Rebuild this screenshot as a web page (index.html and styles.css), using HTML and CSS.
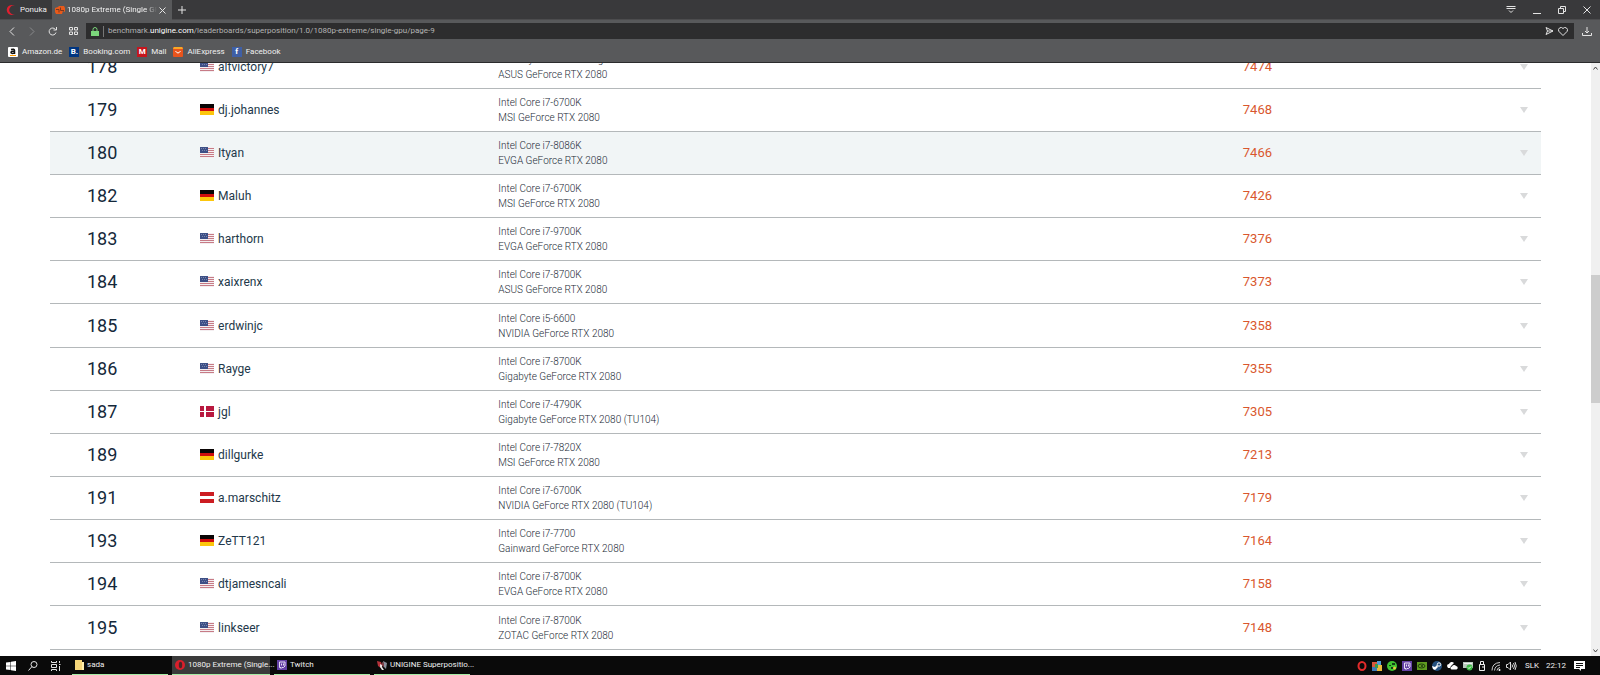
FILE: index.html
```html
<!DOCTYPE html>
<html lang="en">
<head>
<meta charset="utf-8">
<title>1080p Extreme (Single GPU)</title>
<link rel="stylesheet" href="styles.css">
</head>
<body>
<svg class="defs" aria-hidden="true">
  <symbol id="us" viewBox="0 0 14 11"><path fill="#f4eff1" d="M0 0h14v11H0z"/><path fill="#c77b86" d="M0 1h14v1H0zM0 3h14v1H0zM0 5h14v1H0zM0 7h14v1H0zM0 9h14v1H0z"/><path fill="#3d4f86" d="M0 0h8v6H0z"/><path fill="#7885ad" d="M1 1h1v1H1zM3 1h1v1H3zM5 1h1v1H5zM2 3h1v1H2zM4 3h1v1H4zM6 3h1v1H6z"/></symbol>
  <symbol id="de" viewBox="0 0 14 11"><path fill="#0a0505" d="M0 0h14v4H0z"/><path fill="#cf0d0d" d="M0 4h14v3H0z"/><path fill="#fcc60c" d="M0 7h14v4H0z"/></symbol>
  <symbol id="dk" viewBox="0 0 14 11"><path fill="#b8193f" d="M0 0h14v11H0z"/><path fill="#fff" d="M4 0h2v11H4zM0 5h14v1H0z"/></symbol>
  <symbol id="at" viewBox="0 0 14 11"><path fill="#fff" d="M0 0h14v11H0z"/><path fill="#cc1d22" d="M0 0h14v4H0zM0 7h14v4H0z"/></symbol>
  <symbol id="twitch" viewBox="0 0 10 10"><path fill="#6441a5" d="M0 0h10v10H0z"/><path fill="none" stroke="#e6dff5" d="M2.5 2h5.500v4L6.500 7.500H5L4 8.500v-1H2.500zM4.500 3.500v2M6.500 3.500v2"/></symbol>
</svg>

<header class="browser">
  <div class="tabs">
    <button class="tab menu"><svg width="10" height="10" viewBox="0 0 10 10"><path fill="#e01e2f" d="M9 1.200A5 5 0 1 0 9 8.800 3.500 3.500 0 0 1 4.500 8 4.500 4.500 0 0 1 4.500 2 3.500 3.500 0 0 1 9 1.200z"/></svg>Ponuka</button>
    <div class="tab active">
      <svg width="10" height="10" viewBox="0 0 10 10"><path fill="#e85a1a" d="M0 3l3-1 1-1h5l1 2v4L8 6 7 9H1L0 7z"/><path fill="none" stroke="#7b3820" d="M1 4.500h3v3M5.500 2.500v3H9"/></svg>
      <span class="tab-title">1080p Extreme (Single GPU)</span>
      <button class="icon" aria-label="Close tab"><svg width="7" height="7" viewBox="0 0 7 7"><path d="M.5.5l6 6M6.500.5l-6 6"/></svg></button>
    </div>
    <button class="icon plus" aria-label="New tab"><svg width="8" height="8" viewBox="0 0 8 8"><path d="M4 0v8M0 4h8"/></svg></button>
    <div class="window-buttons">
      <button class="icon" aria-label="Tab menu"><svg width="10" height="9" viewBox="0 0 10 9"><path d="M.5 1.500h9M.5 3.500h9M3 5.500l2 2 2-2"/></svg></button>
      <button class="icon" aria-label="Minimize"><svg width="8" height="8" viewBox="0 0 8 8"><path d="M0 7.500h8"/></svg></button>
      <button class="icon" aria-label="Restore"><svg width="8" height="8" viewBox="0 0 8 8"><path d="M.5 2.500h5v5h-5zM2.500 2.500v-2h5v5h-2"/></svg></button>
      <button class="icon" aria-label="Close"><svg width="8" height="8" viewBox="0 0 8 8"><path d="M.5.5l7 7M7.500.5l-7 7"/></svg></button>
    </div>
  </div>
  <div class="toolbar">
    <nav class="nav-buttons">
      <button class="icon" aria-label="Back"><svg width="8" height="9" viewBox="0 0 8 9"><path d="M6 .5l-4 4 4 4"/></svg></button>
      <button class="icon dim" aria-label="Forward"><svg width="8" height="9" viewBox="0 0 8 9"><path d="M2 .5l4 4-4 4"/></svg></button>
      <button class="icon" aria-label="Reload"><svg width="9" height="9" viewBox="0 0 9 9"><path d="M7.500 2.500a3.500 3.500 0 1 0 .5 3M8.500 0v3h-3"/></svg></button>
      <button class="icon" aria-label="Speed dial"><svg width="9" height="8" viewBox="0 0 9 8"><path d="M.5.5h3v2.500h-3zM5.500.5h3v2.500h-3zM.5 5h3v2.500h-3zM5.500 5h3v2.500h-3z"/></svg></button>
    </nav>
    <div class="address">
      <svg width="8" height="9" viewBox="0 0 8 9"><path fill="#7bd67b" d="M0 4h8v5H0z"/><path fill="none" stroke="#7bd67b" d="M2 4V2.500a2 2 0 0 1 4 0V4"/></svg>
      <span class="divider"></span>
      <span class="url">benchmark.<b>unigine.com</b>/leaderboards/superposition/1.0/1080p-extreme/single-gpu/page-9</span>
      <button class="icon" aria-label="Send"><svg width="9" height="8" viewBox="0 0 9 8"><path d="M1 .5L8 4 1 7.500 2.500 4zM2.500 4H8"/></svg></button>
      <button class="icon" aria-label="Favourite"><svg width="10" height="9" viewBox="0 0 10 9"><path d="M5 8.500L1 4.500a2.300 2.300 0 0 1 4-3 2.300 2.300 0 0 1 4 3z"/></svg></button>
    </div>
    <button class="icon" aria-label="Downloads"><svg width="10" height="9" viewBox="0 0 10 9"><path d="M5 0v6M3 4l2 2 2-2M.5 6v2.500h9V6"/></svg></button>
  </div>
  <nav class="bookmarks">
    <a href="#"><svg width="10" height="10" viewBox="0 0 10 10"><rect width="10" height="10" rx="1" fill="#fff"/><path fill="none" stroke="#111" stroke-width="1.500" d="M3 2.500q3.500-1 3.500 1V7M6.500 4Q3 4 3 5.500t3.500.5"/><path fill="none" stroke="#f90" d="M2 8.500h6"/></svg>Amazon.de</a>
    <a href="#"><span class="badge booking">B.</span>Booking.com</a>
    <a href="#"><span class="badge mall">M</span>Mall</a>
    <a href="#"><svg width="10" height="10" viewBox="0 0 10 10"><rect width="10" height="10" rx="1" fill="#e8541c"/><path fill="#f7a826" d="M1 0h8l1 2H0z"/><path fill="none" stroke="#fff" d="M2.500 4q2.500 4 5 0"/></svg>AliExpress</a>
    <a href="#"><span class="badge facebook">f</span>Facebook</a>
  </nav>
</header>

<div class="view">
  <main class="page">
    <table class="board">
      <colgroup><col class="c-rank"><col class="c-user"><col class="c-hardware"><col><col></colgroup>
      <tbody>
        <tr><td class="rank">178</td><td class="user"><svg class="flag"><use href="#us"/></svg><a href="#">altvictory7</a></td><td class="hardware">AMD Ryzen 7 2700X Eight-Core<br>ASUS GeForce RTX 2080</td><td class="score">7474</td><td class="more"><button aria-label="Details"></button></td></tr>
        <tr><td class="rank">179</td><td class="user"><svg class="flag"><use href="#de"/></svg><a href="#">dj.johannes</a></td><td class="hardware">Intel Core i7-6700K<br>MSI GeForce RTX 2080</td><td class="score">7468</td><td class="more"><button aria-label="Details"></button></td></tr>
        <tr class="hover"><td class="rank">180</td><td class="user"><svg class="flag"><use href="#us"/></svg><a href="#">Ityan</a></td><td class="hardware">Intel Core i7-8086K<br>EVGA GeForce RTX 2080</td><td class="score">7466</td><td class="more"><button aria-label="Details"></button></td></tr>
        <tr><td class="rank">182</td><td class="user"><svg class="flag"><use href="#de"/></svg><a href="#">Maluh</a></td><td class="hardware">Intel Core i7-6700K<br>MSI GeForce RTX 2080</td><td class="score">7426</td><td class="more"><button aria-label="Details"></button></td></tr>
        <tr><td class="rank">183</td><td class="user"><svg class="flag"><use href="#us"/></svg><a href="#">harthorn</a></td><td class="hardware">Intel Core i7-9700K<br>EVGA GeForce RTX 2080</td><td class="score">7376</td><td class="more"><button aria-label="Details"></button></td></tr>
        <tr><td class="rank">184</td><td class="user"><svg class="flag"><use href="#us"/></svg><a href="#">xaixrenx</a></td><td class="hardware">Intel Core i7-8700K<br>ASUS GeForce RTX 2080</td><td class="score">7373</td><td class="more"><button aria-label="Details"></button></td></tr>
        <tr><td class="rank">185</td><td class="user"><svg class="flag"><use href="#us"/></svg><a href="#">erdwinjc</a></td><td class="hardware">Intel Core i5-6600<br>NVIDIA GeForce RTX 2080</td><td class="score">7358</td><td class="more"><button aria-label="Details"></button></td></tr>
        <tr><td class="rank">186</td><td class="user"><svg class="flag"><use href="#us"/></svg><a href="#">Rayge</a></td><td class="hardware">Intel Core i7-8700K<br>Gigabyte GeForce RTX 2080</td><td class="score">7355</td><td class="more"><button aria-label="Details"></button></td></tr>
        <tr><td class="rank">187</td><td class="user"><svg class="flag"><use href="#dk"/></svg><a href="#">jgl</a></td><td class="hardware">Intel Core i7-4790K<br>Gigabyte GeForce RTX 2080 (TU104)</td><td class="score">7305</td><td class="more"><button aria-label="Details"></button></td></tr>
        <tr><td class="rank">189</td><td class="user"><svg class="flag"><use href="#de"/></svg><a href="#">dillgurke</a></td><td class="hardware">Intel Core i7-7820X<br>MSI GeForce RTX 2080</td><td class="score">7213</td><td class="more"><button aria-label="Details"></button></td></tr>
        <tr><td class="rank">191</td><td class="user"><svg class="flag"><use href="#at"/></svg><a href="#">a.marschitz</a></td><td class="hardware">Intel Core i7-6700K<br>NVIDIA GeForce RTX 2080 (TU104)</td><td class="score">7179</td><td class="more"><button aria-label="Details"></button></td></tr>
        <tr><td class="rank">193</td><td class="user"><svg class="flag"><use href="#de"/></svg><a href="#">ZeTT121</a></td><td class="hardware">Intel Core i7-7700<br>Gainward GeForce RTX 2080</td><td class="score">7164</td><td class="more"><button aria-label="Details"></button></td></tr>
        <tr><td class="rank">194</td><td class="user"><svg class="flag"><use href="#us"/></svg><a href="#">dtjamesncali</a></td><td class="hardware">Intel Core i7-8700K<br>EVGA GeForce RTX 2080</td><td class="score">7158</td><td class="more"><button aria-label="Details"></button></td></tr>
        <tr><td class="rank">195</td><td class="user"><svg class="flag"><use href="#us"/></svg><a href="#">linkseer</a></td><td class="hardware">Intel Core i7-8700K<br>ZOTAC GeForce RTX 2080</td><td class="score">7148</td><td class="more"><button aria-label="Details"></button></td></tr>
      </tbody>
    </table>
  </main>
  <div class="scrollbar">
    <svg width="5" height="4" viewBox="0 0 5 4"><path d="M.5 3.500l2-2.500 2 2.500"/></svg>
    <div class="track"><div class="thumb"></div></div>
    <svg width="5" height="4" viewBox="0 0 5 4"><path d="M.5.5l2 2.500 2-2.500"/></svg>
  </div>
</div>

<footer class="taskbar">
  <div class="system">
    <button class="icon" aria-label="Start"><svg width="10" height="10" viewBox="0 0 10 10"><path class="solid" d="M0 1.500L4.500 1v3.700H0zM5 .8L10 0v4.700H5zM0 5.300h4.500V9L0 8.500zM5 5.300h5V10L5 9.200z"/></svg></button>
    <button class="icon" aria-label="Search"><svg width="10" height="10" viewBox="0 0 10 10"><circle cx="6" cy="3.500" r="3"/><path d="M4 5.500L.5 9.500"/></svg></button>
    <button class="icon" aria-label="Task view"><svg width="11" height="10" viewBox="0 0 11 10"><path d="M1.500 0v1.500h5V0M1.500 10V8.500h5V10M1.500 3.500h5v3h-5zM9.500 0v2M9.500 5v5M9 3.500h1.500"/></svg></button>
  </div>
  <div class="tasks">
    <button class="task"><svg width="9" height="10" viewBox="0 0 9 10"><path fill="#f5d67a" d="M0 0h7v2h1v8H0z"/><path fill="#fff0b0" d="M7 2h2v8H7z"/></svg><span>sada</span></button>
    <button class="task current"><svg width="10" height="10" viewBox="0 0 10 10"><circle cx="5" cy="5" r="5" fill="#d91f2b"/><ellipse cx="5.500" cy="5" rx="1.700" ry="3.300" fill="#4a2427"/></svg><span>1080p Extreme (Single...</span></button>
    <button class="task"><svg width="10" height="10"><use href="#twitch"/></svg><span>Twitch</span></button>
    <button class="task"><svg width="10" height="10" viewBox="0 0 10 10"><path fill="#b5333b" d="M0 1l4 1 1 3-1 3-3-2z"/><path fill="#e9e4e4" d="M3 4l2 1v2l2 3H5L3 7z"/><path fill="#8b8f9c" d="M6 1l4 2-1 6-2-2z"/><path fill="#7a4048" d="M5 2l2 1v4L5 6z"/></svg><span>UNIGINE Superpositio...</span></button>
  </div>
  <div class="tray">
    <svg width="10" height="10" viewBox="0 0 10 10"><ellipse cx="5" cy="5" rx="3.500" ry="4" fill="none" stroke="#e32b2b" stroke-width="2"/></svg>
    <svg width="10" height="10" viewBox="0 0 10 10"><path fill="#d9583b" d="M0 1h5v5H0z"/><path fill="#4e9bd6" d="M5 0h4v4H5z"/><path fill="#3d7ab8" d="M0 6h5v4H0z"/><path fill="#e9b93c" d="M5 4h5v6H5z"/><path fill="#3d9a4c" d="M3 3h3v4H3z"/></svg>
    <svg width="10" height="10" viewBox="0 0 10 10"><circle cx="5" cy="5" r="5" fill="#3fc232"/><path fill="#123f14" d="M2 4h2v1H2zM5 2h3v2H5zM4 6h3v2H4z"/><circle cx="7.500" cy="7" r="1.500" fill="#e5d23c"/></svg>
    <svg width="10" height="10"><use href="#twitch"/></svg>
    <svg width="10" height="10" viewBox="0 0 10 10"><path fill="#5f9b20" d="M0 1h10v8H0z"/><ellipse cx="4.500" cy="5" rx="3.500" ry="2" fill="none" stroke="#1e3d0d"/><circle cx="5" cy="5" r="1" fill="#1e3d0d"/></svg>
    <svg width="10" height="10" viewBox="0 0 10 10"><circle cx="5" cy="5" r="5" fill="#24507e"/><circle cx="7" cy="3.500" r="1.700" fill="none" stroke="#fff"/><path fill="#fff" d="M0 5l3 1 2-2 1 2-3 3-2-1z"/></svg>
    <svg width="11" height="10" viewBox="0 0 11 10"><path fill="#fff" d="M0 5a2 2 0 0 1 2-2 3 3 0 0 1 5-1L4 5 3 7H1z"/><path fill="#fff" d="M5 8.500a1.500 1.500 0 0 1 0-3 2.200 2.200 0 0 1 4-.5 1.800 1.800 0 0 1 .5 3.500z"/></svg>
    <svg width="10" height="10" viewBox="0 0 10 10"><path fill="#b9c9bd" d="M0 1h10v6H0z"/><path fill="#eee" d="M1 2h8v1H1z"/><circle cx="6.500" cy="6.500" r="3" fill="#3dba45"/><path fill="none" stroke="#fff" d="M5 6.500l1 1 2-2"/></svg>
    <svg width="8" height="10" viewBox="0 0 8 10"><path fill="none" stroke="#eee" d="M2.500 3V.5h3V3M1.500 3.500h5v6h-5zM4 6h2"/></svg>
    <svg width="10" height="10" viewBox="0 0 10 10"><path fill="none" stroke="#ccc" d="M1 9.500Q1 2 9 1.500M3.500 9.500Q4 4.500 9 4M6 9.500Q6 7 9 6.500"/><circle cx="8.500" cy="9" r="1" fill="#fff"/></svg>
    <svg width="11" height="10" viewBox="0 0 11 10"><path fill="none" stroke="#ddd" d="M.5 3.500H2L4.500 1v8L2 6.500H.5zM6 3.500q1 1.500 0 3M7.500 2q2 3 0 6M9 1q2.500 4 0 8"/></svg>
    <span class="language">SLK</span>
    <time>22:12</time>
    <svg width="11" height="10" viewBox="0 0 11 10"><path fill="#fff" d="M0 0h11v8H7v2L5 8H0z"/><path stroke="#111" d="M2 2.500h7M2 4.500h7M2 6.500h4"/></svg>
  </div>
</footer>
</body>
</html>
```
FILE: styles.css
```css
* {
  box-sizing: border-box;
}

body {
  margin: 0;
  height: 100vh;
  display: flex;
  flex-direction: column;
  overflow: hidden;
  background: #fff;
  font-family: Roboto, "Open Sans", sans-serif;
  font-size: 8px;
  line-height: 10px;
  color: #f0f0f0;
}

button {
  margin: 0;
  padding: 0;
  border: 0;
  background: none;
  color: inherit;
  font: inherit;
}

a {
  color: inherit;
  text-decoration: none;
}

svg {
  display: block;
  flex: none;
}

.defs {
  position: absolute;
  width: 0;
  height: 0;
}

.icon {
  display: flex;
  align-items: center;
  justify-content: center;
}

.icon path,
.icon circle {
  fill: none;
  stroke: #e4e4e4;
}

.icon .solid {
  fill: #fff;
  stroke: none;
}

.dim {
  opacity: 0.35;
}

/* Browser window */

.browser {
  flex: none;
  background: #58595b;
  border-bottom: 1px solid #2b2b2c;
}

.tabs {
  display: flex;
  height: 20px;
  background: #39393b;
  border-bottom: 1px solid #4c4c4e;
}

.tab {
  display: flex;
  align-items: center;
  gap: 4px;
}

.menu {
  width: 52px;
  padding-left: 6px;
}

.active {
  gap: 2px;
  width: 120px;
  height: 20px;
  padding: 0 6px 0 3px;
  background: #58595b;
}

.tab-title {
  flex: 1;
  overflow: hidden;
  white-space: nowrap;
  mask-image: linear-gradient(to right, #000 88%, transparent);
}

.plus {
  width: 20px;
}

.window-buttons {
  display: flex;
  gap: 17px;
  margin-left: auto;
  padding-right: 9px;
}

.toolbar {
  display: flex;
  align-items: center;
  gap: 8px;
  height: 22px;
  padding: 0 8px;
}

.nav-buttons {
  display: flex;
  gap: 12px;
  width: 70px;
}

.address {
  flex: 1;
  display: flex;
  align-items: center;
  gap: 4px;
  height: 16px;
  padding: 0 6px 0 5px;
  background: #2d2d2e;
}

.divider {
  width: 1px;
  height: 11px;
  background: #777;
}

.url {
  flex: 1;
  color: #b4b4b4;
}

.url b {
  color: #fff;
  font-weight: 400;
}

.bookmarks {
  display: flex;
  gap: 7px;
  height: 20px;
  padding-left: 8px;
}

.bookmarks a {
  display: flex;
  align-items: center;
  gap: 4px;
}

.badge {
  width: 10px;
  height: 10px;
  text-align: center;
  font-weight: 700;
  color: #fff;
}

.booking {
  background: #003580;
}

.mall {
  background: #c5161d;
}

.facebook {
  background: #3f5fa5;
}

/* Leaderboard */

.view {
  flex: 1;
  min-height: 0;
  display: flex;
}

.page {
  flex: 1;
  overflow: hidden;
  padding: 0 50px;
}

.board {
  width: 100%;
  margin-top: -17px;
  table-layout: fixed;
  border-collapse: separate;
  border-spacing: 0;
  color: #23384a;
}

.c-rank {
  width: 10%;
}

.c-user {
  width: 20%;
}

.c-hardware {
  width: 50%;
}

.board tr {
  height: 43px;
}

.board tr:nth-child(7n) {
  height: 44px;
}

.board td {
  padding: 0 0 0 1px;
  border-bottom: 1px solid #b4b8ba;
  vertical-align: middle;
}

.hover {
  background: #f1f5f6;
}

.board .rank {
  padding: 0 0 0 37px;
  font-size: 18px;
  line-height: 22px;
  color: #14283a;
}

.user {
  font-size: 12px;
  line-height: 16px;
}

.flag {
  display: inline-block;
  width: 14px;
  height: 11px;
  margin-right: 4px;
  vertical-align: -1px;
}

.hardware {
  font-size: 10px;
  font-weight: 300;
  line-height: 15px;
  color: #1b2a36;
}

.board .score {
  padding: 0;
  font-size: 13px;
  line-height: 16px;
  color: #d9572e;
}

.board .more {
  padding-right: 13px;
}

.more button {
  display: block;
  margin-left: auto;
  border: 4px solid transparent;
  border-top: 6px solid #d9dadb;
  border-bottom: 0;
}

.scrollbar {
  width: 9px;
  display: flex;
  flex-direction: column;
  align-items: center;
  padding: 3px 0;
  background: #f0f0f0;
}

.scrollbar path {
  fill: none;
  stroke: #444;
}

.track {
  flex: 1;
  align-self: stretch;
  padding-top: 205px;
}

.thumb {
  height: 128px;
  background: #cdcdcd;
}

/* Taskbar */

.taskbar {
  flex: none;
  display: flex;
  height: 19px;
  background: #0a0a0a;
}

.system {
  display: flex;
  gap: 12px;
  width: 72px;
  padding-left: 6px;
}

.tasks {
  display: flex;
  gap: 4px;
}

.task {
  display: flex;
  align-items: center;
  gap: 3px;
  width: 96px;
  padding-left: 3px;
  border-bottom: 1px solid #a5eca5;
  white-space: nowrap;
}

.current {
  width: 98px;
  background: #3b3b3b;
}

.tray {
  display: flex;
  align-items: center;
  gap: 5px;
  margin-left: auto;
  padding-right: 15px;
}

.language {
  margin: 0 2px 0 3px;
}

.tray time {
  margin-right: 3px;
}
```
